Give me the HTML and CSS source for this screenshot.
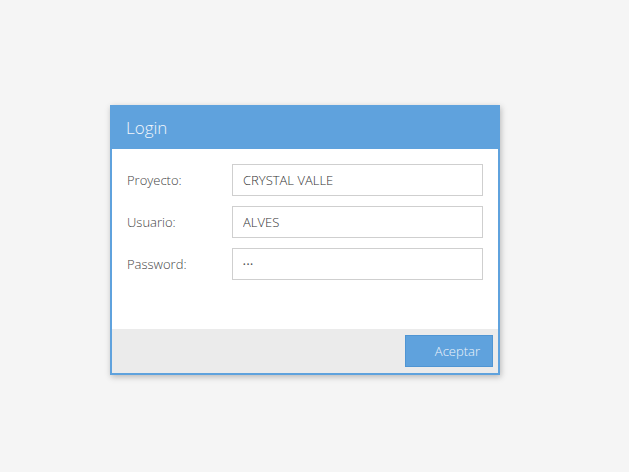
FILE: index.html
```html
<!DOCTYPE html>
<html lang="es">
<head>
<meta charset="utf-8">
<title>Login</title>
<link rel="stylesheet" href="styles.css">
</head>
<body>
<div class="dialog">
  <div class="dialog-header">Login</div>
  <div class="dialog-body">
    <div class="row">
      <label class="label" for="proyecto">Proyecto:</label>
      <input class="field" id="proyecto" type="text" value="CRYSTAL VALLE">
    </div>
    <div class="row">
      <label class="label" for="usuario">Usuario:</label>
      <input class="field" id="usuario" type="text" value="ALVES">
    </div>
    <div class="row">
      <label class="label" for="password">Password:</label>
      <input class="field field-pass" id="password" type="password" value="abc">
    </div>
  </div>
  <div class="dialog-footer">
    <button class="btn" type="button">Aceptar</button>
  </div>
</div>
</body>
</html>
```
FILE: styles.css
```css
html, body {
  margin: 0;
  padding: 0;
}
body {
  background: #f5f5f5;
  font-family: "Open Sans", "Noto Sans", sans-serif;
  width: 629px;
  height: 472px;
  overflow: hidden;
}
.dialog {
  margin: 105px 0 0 110px;
  width: 390px;
  height: 270px;
  box-sizing: border-box;
  border: 2px solid #5fa2dd;
  background: #ffffff;
  box-shadow: 1px 2px 6px rgba(0, 0, 0, 0.25);
  display: flex;
  flex-direction: column;
}
.dialog-header {
  height: 42px;
  margin-top: -2px;
  padding-top: 2px;
  margin-left: -2px;
  margin-right: -2px;
  padding-left: 16px;
  background: #5fa2dd;
  color: #f2f6fb;
  font-size: 17px;
  font-weight: 300;
  line-height: 42px;
  box-sizing: content-box;
}
.dialog-body {
  flex: 1;
  padding: 15px 15px 0 15px;
  display: flex;
  flex-direction: column;
  gap: 10px;
}
.row {
  display: flex;
  align-items: center;
  height: 32px;
}
.label {
  width: 105px;
  font-size: 13px;
  font-weight: 300;
  color: #444444;
}
.field {
  flex: 1;
  height: 32px;
  box-sizing: border-box;
  border: 1px solid #cfcfcf;
  padding: 0 10px;
  font-family: "Open Sans", "Noto Sans", sans-serif;
  font-size: 13px;
  font-weight: 300;
  color: #333333;
  background: #ffffff;
  outline: none;
  margin: 0;
}
.field-pass {
  font-size: 7px;
  font-weight: 400;
  letter-spacing: 1px;
  color: #555555;
}
.dialog-footer {
  height: 44px;
  background: #ebebeb;
  display: flex;
  justify-content: flex-end;
  align-items: center;
  padding-right: 5px;
}
.btn {
  width: 88px;
  height: 32px;
  box-sizing: border-box;
  background: #5fa2dd;
  border: 1px solid #4f95d3;
  color: #eef4fb;
  font-family: "Open Sans", "Noto Sans", sans-serif;
  font-size: 13px;
  font-weight: 300;
  text-align: right;
  padding: 0 12px 0 0;
  margin: 0;
}
```
